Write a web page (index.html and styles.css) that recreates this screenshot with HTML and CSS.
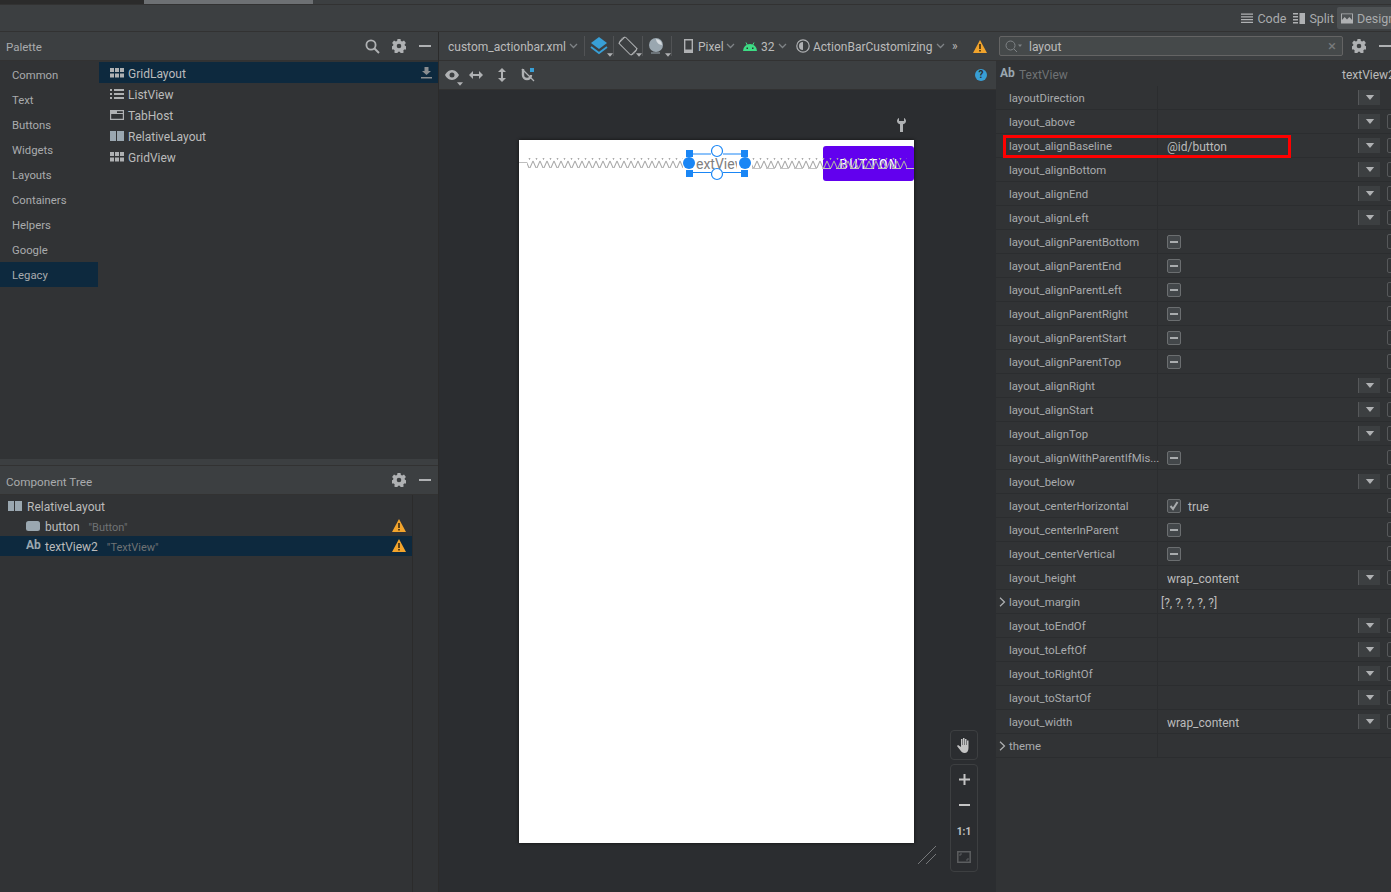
FILE: index.html
```html
<!DOCTYPE html>
<html lang="en">
<head>
    <meta charset="utf-8">
    <title>custom_actionbar.xml</title>
    <link rel="stylesheet" href="styles.css">
</head>
<body>

<!-- Shared icons -->
<svg class="defs" width="0" height="0">
    <defs>
        <symbol id="i-grid" viewBox="0 0 14 10"><path fill="#afb1b3" d="M0 0h4v4H0zM5 0h4v4H5zM10 0h4v4h-4zM0 5.500h4v4H0zM5 5.500h4v4H5zM10 5.500h4v4h-4z"/></symbol>
        <symbol id="i-list" viewBox="0 0 14 10"><path fill="#afb1b3" d="M0 0h2v2H0zM4 0h10v2H4zM0 4h2v2H0zM4 4h10v2H4zM0 8h2v2H0zM4 8h10v2H4z"/></symbol>
        <symbol id="i-tab" viewBox="0 0 14 10"><path fill="none" stroke="#afb1b3" stroke-width="1.200" d="M.6.6h12.800v8.800H.6z"/><path fill="#afb1b3" d="M1 1h6v2h6v1H1z"/></symbol>
        <symbol id="i-rel" viewBox="0 0 14 10"><path fill="#9aa7b0" d="M0 0h6v10H0zM7 0h7v10H7z"/></symbol>
        <symbol id="i-gear" viewBox="0 0 14 14"><path fill="#afb1b3" fill-rule="evenodd" d="M5.500 0h3l.4 2 1.300.6L12 1.600l1.900 2.300-1.300 1.500.3 1.300 1.900.8-.6 2.900-2 .1-.9 1.100.4 2-2.800 1-1-1.800H6.100l-1 1.800-2.800-1 .4-2-.9-1.100-2-.1L-.8 7.500l1.900-.8.300-1.300L.1 3.900 2 1.600l1.800 1 1.300-.6zM7 4.700a2.300 2.300 0 1 0 0 4.600 2.300 2.300 0 0 0 0-4.600z"/></symbol>
        <symbol id="i-warn" viewBox="0 0 14 13"><path fill="#f2a42c" d="M7 0l7 13H0z"/><path fill="#3a2a10" d="M6.200 4h1.600v5H6.200zM6.200 10h1.600v1.600H6.200z"/></symbol>
        <symbol id="i-chev" viewBox="0 0 9 6"><path fill="none" stroke="#7f8386" stroke-width="1.300" d="M1 1l3.500 3.500L8 1"/></symbol>
        <symbol id="i-tri" viewBox="0 0 10 6"><path fill="#afb1b3" d="M0 0h10L5 6z"/></symbol>
        <symbol id="i-arrow" viewBox="0 0 7 10"><path fill="none" stroke="#afb1b3" stroke-width="1.200" d="M1 .7L5.500 5 1 9.300"/></symbol>
        <symbol id="i-min" viewBox="0 0 12 2"><path fill="#afb1b3" d="M0 0h12v2H0z"/></symbol>
        <pattern id="zigzag" width="7" height="10" patternUnits="userSpaceOnUse"><path fill="none" stroke="#aaaaaa" stroke-width="1.100" d="M0 1L3.500 9 7 1"/></pattern>
    </defs>
</svg>

<!-- Top strips -->
<div class="tab-strip"><div class="tab-dark"></div><div class="tab-thumb"></div></div>
<div class="editor-bar">
    <span class="mode mode-code">
        <svg class="ico14" viewBox="0 0 13 11"><path fill="#afb1b3" d="M0 0h13v1.500H0zM0 3h13v1.500H0zM0 6h13v1.500H0zM0 9h13v1.500H0z"/></svg>Code
    </span>
    <span class="mode">
        <svg class="ico14" viewBox="0 0 12 11"><path fill="#afb1b3" d="M0 0h5v1.500H0zM0 3h5v1.500H0zM0 6h5v1.500H0zM0 9h5v1.500H0zM6.500 0H12v11H6.500z"/></svg>Split
    </span>
    <span class="mode mode-on">
        <svg class="ico14" viewBox="0 0 13 11"><path fill="#afb1b3" fill-rule="evenodd" d="M0 0h13v11H0zM1 1v6l3-3 2.500 2.500L9 4l3 3V1z"/></svg>Design
    </span>
</div>

<div class="workspace">

    <!-- Left column -->
    <div class="left-col">
        <div class="panel-head">
            <span class="panel-title">Palette</span>
            <svg class="head-ico search-ico" viewBox="0 0 15 15"><circle cx="6" cy="6" r="4.600" fill="none" stroke="#afb1b3" stroke-width="1.800"/><path stroke="#afb1b3" stroke-width="2" d="M9.500 9.500L14 14"/></svg>
            <svg class="head-ico gear-a"><use href="#i-gear"/></svg>
            <svg class="head-min"><use href="#i-min"/></svg>
        </div>
        <div class="palette">
            <div class="categories">
                <div class="cat">Common</div>
                <div class="cat">Text</div>
                <div class="cat">Buttons</div>
                <div class="cat">Widgets</div>
                <div class="cat">Layouts</div>
                <div class="cat">Containers</div>
                <div class="cat">Helpers</div>
                <div class="cat">Google</div>
                <div class="cat cat-on">Legacy</div>
            </div>
            <div class="widgets">
                <div class="widget widget-on"><svg class="w-ico"><use href="#i-grid"/></svg>GridLayout
                    <svg class="download" viewBox="0 0 11 12"><path fill="#8a8d90" d="M3.500 0h4v4H10L5.500 8 1 4h2.500zM0 10h11v1.500H0z"/></svg>
                </div>
                <div class="widget"><svg class="w-ico"><use href="#i-list"/></svg>ListView</div>
                <div class="widget"><svg class="w-ico"><use href="#i-tab"/></svg>TabHost</div>
                <div class="widget"><svg class="w-ico"><use href="#i-rel"/></svg>RelativeLayout</div>
                <div class="widget"><svg class="w-ico"><use href="#i-grid"/></svg>GridView</div>
            </div>
        </div>
        <div class="split-bar"></div>
        <div class="panel-head tree-head">
            <span class="panel-title">Component Tree</span>
            <svg class="head-ico gear-a"><use href="#i-gear"/></svg>
            <svg class="head-min"><use href="#i-min"/></svg>
        </div>
        <div class="tree">
            <div class="tree-main">
                <div class="node"><svg class="n-ico"><use href="#i-rel"/></svg>RelativeLayout</div>
                <div class="node node-child">
                    <svg class="n-ico" viewBox="0 0 14 10"><rect width="14" height="10" rx="2.500" fill="#9aa7b0"/></svg>button<span class="quoted">"Button"</span>
                    <svg class="n-warn"><use href="#i-warn"/></svg>
                </div>
                <div class="node node-child node-on">
                    <span class="ab">Ab</span>textView2<span class="quoted">"TextView"</span>
                    <svg class="n-warn"><use href="#i-warn"/></svg>
                </div>
            </div>
        </div>
    </div>

    <!-- Design surface -->
    <div class="center-col">
        <div class="bar-one">
            <span class="file-name">custom_actionbar.xml</span>
            <svg class="chev"><use href="#i-chev"/></svg>
            <i class="sep sep-first"></i>
            <span class="tool tool-layers">
                <svg width="20" height="20" viewBox="0 0 20 20"><path fill="#389fd6" d="M10 1l8 6-8 6-8-6z"/><path fill="none" stroke="#389fd6" stroke-width="1.800" d="M2 11l8 6 8-6"/></svg>
                <svg class="tri"><use href="#i-tri"/></svg>
            </span>
            <i class="sep"></i>
            <span class="tool">
                <svg width="20" height="20" viewBox="0 0 20 20"><g fill="none" stroke="#afb1b3" stroke-width="1"><rect x="5.500" y="1.500" width="9" height="17" rx="1" transform="rotate(-45 10 10)"/><path d="M1 8a9 9 0 0 1 6-7M19 12a9 9 0 0 1-6 7"/></g></svg>
                <svg class="tri"><use href="#i-tri"/></svg>
            </span>
            <i class="sep"></i>
            <span class="tool">
                <svg width="20" height="20" viewBox="0 0 20 20"><circle cx="9" cy="9" r="7" fill="#9aa7b0"/><path fill="#d5dade" d="M9 3a6 6 0 0 1 6 6c-3 0-6-3-6-6z"/><path fill="none" stroke="#9aa7b0" d="M4 17h9"/></svg>
                <svg class="tri"><use href="#i-tri"/></svg>
            </span>
            <i class="sep"></i>
            <svg class="dev-ico" viewBox="0 0 9 14"><path fill="none" stroke="#afb1b3" stroke-width="1.400" d="M.7.7h7.600v12.600H.7z"/><path fill="#afb1b3" d="M1 10.500h7v3H1z"/></svg>
            <span class="bar-txt txt-pixel">Pixel</span>
            <svg class="chev"><use href="#i-chev"/></svg>
            <svg class="droid" viewBox="0 0 14 9"><path fill="#3ddc84" d="M0 9a7 7 0 0 1 14 0z"/><path stroke="#3ddc84" d="M3 .5l1.500 3M11 .5L9.500 3.500"/><path fill="#313335" d="M3.500 5.500h1.500v1.500H3.500zM9 5.500h1.500v1.500H9z"/></svg>
            <span class="bar-txt txt-api">32</span>
            <svg class="chev"><use href="#i-chev"/></svg>
            <svg class="theme-ico" viewBox="0 0 14 14"><circle cx="7" cy="7" r="6.200" fill="none" stroke="#afb1b3" stroke-width="1.200"/><path fill="#afb1b3" d="M7 3a4 4 0 0 0 0 8z"/></svg>
            <span class="bar-txt txt-theme">ActionBarCustomizing</span>
            <svg class="chev"><use href="#i-chev"/></svg>
            <span class="more">&raquo;</span>
            <svg class="bar-warn"><use href="#i-warn"/></svg>
        </div>
        <div class="bar-two">
            <span class="tool eye">
                <svg width="14" height="10" viewBox="0 0 14 10"><path fill="#afb1b3" fill-rule="evenodd" d="M7 0c3.500 0 6 3 7 5-1 2-3.500 5-7 5S1 7 0 5c1-2 3.500-5 7-5zm0 2.500a2.500 2.500 0 1 0 0 5 2.500 2.500 0 0 0 0-5z"/></svg>
                <svg class="tri"><use href="#i-tri"/></svg>
            </span>
            <svg class="arrow-h" viewBox="0 0 14 8"><path fill="#afb1b3" d="M0 4l4-4v3h6V0l4 4-4 4V5H4v3z"/></svg>
            <svg class="arrow-v" viewBox="0 0 8 14"><path fill="#afb1b3" d="M4 0l4 4H5v6h3l-4 4-4-4h3V4H0z"/></svg>
            <svg class="magnet" viewBox="0 0 14 14"><path fill="none" stroke="#afb1b3" stroke-width="2.400" d="M2 1v6a4 4 0 0 0 8 0"/><path stroke="#afb1b3" stroke-width="1.200" d="M1 1l12 12"/><path fill="#389fd6" d="M9 0h4v4H9z"/></svg>
            <span class="help">?</span>
        </div>
        <div class="surface">
            <div class="device">
                <svg class="blueprint" width="395" height="60" viewBox="0 0 395 60">
                    <path fill="none" stroke="#bdbdbd" d="M0 22.500h8"/>
                    <rect x="8" y="18" width="156" height="10" fill="url(#zigzag)"/>
                    <rect x="304" y="6" width="91" height="35" rx="3" fill="#6200ee"/>
                    <text class="btn-label" x="350" y="29" text-anchor="middle">BUTTON</text>
                    <rect x="233" y="18" width="155" height="10" fill="url(#zigzag)"/>
                    <path fill="none" stroke="#c4c4c4" stroke-dasharray="9 5" d="M233 28.500h162"/>
                    <svg x="177" y="10" width="41" height="30"><text class="tv-label" x="0" y="19">extView</text></svg>
                    <g fill="none" stroke="#1a86f5" stroke-width="1.200">
                        <path d="M174 14h18M204 14h18M174 32.500h18M204 32.500h18"/>
                    </g>
                    <g fill="#1a86f5">
                        <rect x="167" y="10" width="7" height="7"/>
                        <rect x="222" y="10" width="7" height="7"/>
                        <rect x="167" y="30" width="7" height="7"/>
                        <rect x="222" y="30" width="7" height="7"/>
                        <circle cx="170" cy="23" r="6"/>
                        <circle cx="226" cy="23" r="6"/>
                    </g>
                    <g fill="#fff" stroke="#1a86f5" stroke-width="1.200">
                        <circle cx="198" cy="11" r="5.500"/>
                        <circle cx="198" cy="34" r="5.500"/>
                    </g>
                </svg>
            </div>
            <svg class="wrench" viewBox="0 0 9 14"><path fill="#afb1b3" d="M2 0v3h5V0c1.500.7 2 2 2 3 0 1.500-1 2.700-3 3.300V14H3V6.300C1 5.700 0 4.500 0 3c0-1 .5-2.300 2-3z"/></svg>
            <div class="float-box hand-box">
                <svg width="14" height="15" viewBox="0 0 14 15"><path fill="#c4c4c4" d="M4 1h1.500v6H6V0h1.500v7H8V1h1.500v6h.5V2.500h1.500V10c0 3-1.500 5-4 5-2 0-3-1-4-2.500L0 8l1-1 3 2z"/></svg>
            </div>
            <div class="float-box zoom-box">
                <svg width="11" height="11" viewBox="0 0 11 11"><path fill="#c4c4c4" d="M4.500 0h2v4.500H11v2H6.500V11h-2V6.500H0v-2h4.500z"/></svg>
                <svg width="11" height="2" viewBox="0 0 11 2"><path fill="#c4c4c4" d="M0 0h11v2H0z"/></svg>
                <span class="one-one">1:1</span>
                <svg width="14" height="12" viewBox="0 0 14 12"><path fill="none" stroke="#5c5e60" stroke-width="1.500" d="M.8.8h12.400v10.400H.8z"/><path fill="none" stroke="#5c5e60" d="M3 5V3h2M11 7v2H9"/></svg>
            </div>
            <svg class="resize" viewBox="0 0 18 18"><path stroke="#77797b" d="M0 18L18 0M8 18L18 8"/></svg>
        </div>
    </div>

    <!-- Attributes -->
    <div class="right-col">
        <div class="search-row">
            <div class="search-box">
                <svg class="search-small" viewBox="0 0 17 13"><circle cx="5.500" cy="5.500" r="4.500" fill="none" stroke="#7f8386"/><path stroke="#7f8386" d="M9 9l3 3"/><path fill="#7f8386" d="M13 4.500h4l-2 2.500z"/></svg>
                <span class="search-text">layout</span>
                <span class="search-x">&times;</span>
            </div>
            <svg class="head-ico gear-b"><use href="#i-gear"/></svg>
            <svg class="head-min"><use href="#i-min"/></svg>
        </div>
        <div class="attr-head">
            <span class="ab ab-head">Ab</span><span class="attr-type">TextView</span><span class="attr-id">textView2</span>
        </div>
        <div class="attr-table">
            <div class="attr"><span class="a-name">layoutDirection</span><span class="a-val"></span><span class="drop"><svg class="drop-tri"><use href="#i-tri"/></svg></span></div>
            <div class="attr"><span class="a-name">layout_above</span><span class="a-val"></span><span class="drop"><svg class="drop-tri"><use href="#i-tri"/></svg></span><i class="box"></i></div>
            <div class="attr"><span class="a-name">layout_alignBaseline</span><span class="a-val">@id/button</span><span class="drop"><svg class="drop-tri"><use href="#i-tri"/></svg></span><i class="box"></i><div class="red-box"></div></div>
            <div class="attr"><span class="a-name">layout_alignBottom</span><span class="a-val"></span><span class="drop"><svg class="drop-tri"><use href="#i-tri"/></svg></span><i class="box"></i></div>
            <div class="attr"><span class="a-name">layout_alignEnd</span><span class="a-val"></span><span class="drop"><svg class="drop-tri"><use href="#i-tri"/></svg></span><i class="box"></i></div>
            <div class="attr"><span class="a-name">layout_alignLeft</span><span class="a-val"></span><span class="drop"><svg class="drop-tri"><use href="#i-tri"/></svg></span><i class="box"></i></div>
            <div class="attr"><span class="a-name">layout_alignParentBottom</span><span class="a-val"><i class="tick"></i></span><span class="no-drop"></span><i class="box"></i></div>
            <div class="attr"><span class="a-name">layout_alignParentEnd</span><span class="a-val"><i class="tick"></i></span><span class="no-drop"></span><i class="box"></i></div>
            <div class="attr"><span class="a-name">layout_alignParentLeft</span><span class="a-val"><i class="tick"></i></span><span class="no-drop"></span><i class="box"></i></div>
            <div class="attr"><span class="a-name">layout_alignParentRight</span><span class="a-val"><i class="tick"></i></span><span class="no-drop"></span><i class="box"></i></div>
            <div class="attr"><span class="a-name">layout_alignParentStart</span><span class="a-val"><i class="tick"></i></span><span class="no-drop"></span><i class="box"></i></div>
            <div class="attr"><span class="a-name">layout_alignParentTop</span><span class="a-val"><i class="tick"></i></span><span class="no-drop"></span><i class="box"></i></div>
            <div class="attr"><span class="a-name">layout_alignRight</span><span class="a-val"></span><span class="drop"><svg class="drop-tri"><use href="#i-tri"/></svg></span><i class="box"></i></div>
            <div class="attr"><span class="a-name">layout_alignStart</span><span class="a-val"></span><span class="drop"><svg class="drop-tri"><use href="#i-tri"/></svg></span><i class="box"></i></div>
            <div class="attr"><span class="a-name">layout_alignTop</span><span class="a-val"></span><span class="drop"><svg class="drop-tri"><use href="#i-tri"/></svg></span><i class="box"></i></div>
            <div class="attr"><span class="a-name">layout_alignWithParentIfMis...</span><span class="a-val"><i class="tick"></i></span><span class="no-drop"></span><i class="box"></i></div>
            <div class="attr"><span class="a-name">layout_below</span><span class="a-val"></span><span class="drop"><svg class="drop-tri"><use href="#i-tri"/></svg></span><i class="box"></i></div>
            <div class="attr"><span class="a-name">layout_centerHorizontal</span><span class="a-val"><i class="tick tick-on"><svg viewBox="0 0 10 10"><path fill="none" stroke="#a9acae" stroke-width="2" d="M1.500 5l2.500 3 4.500-7"/></svg></i>true</span><span class="no-drop"></span><i class="box"></i></div>
            <div class="attr"><span class="a-name">layout_centerInParent</span><span class="a-val"><i class="tick"></i></span><span class="no-drop"></span><i class="box"></i></div>
            <div class="attr"><span class="a-name">layout_centerVertical</span><span class="a-val"><i class="tick"></i></span><span class="no-drop"></span><i class="box"></i></div>
            <div class="attr"><span class="a-name">layout_height</span><span class="a-val">wrap_content</span><span class="drop"><svg class="drop-tri"><use href="#i-tri"/></svg></span><i class="box"></i></div>
            <div class="attr"><svg class="fold"><use href="#i-arrow"/></svg><span class="a-name">layout_margin</span><span class="a-val a-val-tight">[?, ?, ?, ?, ?]</span></div>
            <div class="attr"><span class="a-name">layout_toEndOf</span><span class="a-val"></span><span class="drop"><svg class="drop-tri"><use href="#i-tri"/></svg></span><i class="box"></i></div>
            <div class="attr"><span class="a-name">layout_toLeftOf</span><span class="a-val"></span><span class="drop"><svg class="drop-tri"><use href="#i-tri"/></svg></span><i class="box"></i></div>
            <div class="attr"><span class="a-name">layout_toRightOf</span><span class="a-val"></span><span class="drop"><svg class="drop-tri"><use href="#i-tri"/></svg></span><i class="box"></i></div>
            <div class="attr"><span class="a-name">layout_toStartOf</span><span class="a-val"></span><span class="drop"><svg class="drop-tri"><use href="#i-tri"/></svg></span><i class="box"></i></div>
            <div class="attr"><span class="a-name">layout_width</span><span class="a-val">wrap_content</span><span class="drop"><svg class="drop-tri"><use href="#i-tri"/></svg></span><i class="box"></i></div>
            <div class="attr"><svg class="fold"><use href="#i-arrow"/></svg><span class="a-name">theme</span><span class="a-val"></span></div>
        </div>
    </div>
</div>

</body>
</html>
```

FILE: styles.css
```css
/* General Layout */
html, body {
    height: 100%;
}

body {
    margin: 0;
    background-color: #3c3f41;
    color: #bbbbbb;
    font-family: Roboto, sans-serif;
    font-size: 12px;
    overflow: hidden;
    display: flex;
    flex-direction: column;
}

svg {
    flex: none;
}

.defs {
    position: absolute;
}

/* Top Strips */
.tab-strip {
    height: 4px;
    display: flex;
    background: #3c3f41;
    border-bottom: 1px solid #323232;
}

.tab-dark {
    width: 144px;
    background: #2b2b2b;
}

.tab-thumb {
    width: 169px;
    background: #6d7073;
}

.editor-bar {
    height: 26px;
    display: flex;
    justify-content: flex-end;
    align-items: center;
    gap: 3px;
    border-bottom: 1px solid #323232;
    overflow: hidden;
}

.mode {
    display: flex;
    align-items: center;
    gap: 4px;
    height: 22px;
    white-space: nowrap;
    font-size: 12.500px;
    color: #a9abad;
}

.mode-code {
    margin-right: 4px;
}

.mode-on {
    flex: none;
    width: 54px;
    box-sizing: border-box;
    padding-left: 4px;
    background: #4e5254;
    border-radius: 2px 0 0 2px;
    overflow: hidden;
}

.ico14 {
    width: 12px;
    height: 11px;
}

/* Three Columns */
.workspace {
    flex: 1;
    display: flex;
    min-height: 0;
}

.left-col {
    width: 438px;
    display: flex;
    flex-direction: column;
    background: #313335;
}

.center-col {
    width: 558px;
    display: flex;
    flex-direction: column;
    background: #2b2d30;
    border-left: 1px solid #2b2b2b;
    box-sizing: border-box;
}

.right-col {
    flex: 1;
    min-width: 0;
    display: flex;
    flex-direction: column;
    background: #313335;
}

/* Panel Headers */
.panel-head {
    height: 28px;
    flex: none;
    display: flex;
    align-items: center;
    padding: 0 7px 0 6px;
    background: #3c3f41;
    border-bottom: 1px solid #323232;
}

.panel-title {
    flex: 1;
    padding-top: 2px;
    font-size: 11.500px;
    color: #a9abad;
}

.tree-head .panel-title {
    padding-top: 4px;
    font-size: 11.700px;
}

.head-ico {
    width: 14px;
    height: 14px;
}

.search-ico {
    width: 15px;
    height: 15px;
    margin-right: 12px;
}

.gear-a {
    margin-right: 13px;
}

.head-min {
    width: 12px;
    height: 2px;
}

/* Palette */
.palette {
    height: 398px;
    flex: none;
    display: flex;
    padding-top: 1px;
    box-sizing: border-box;
}

.categories {
    width: 98px;
    flex: none;
    margin-right: 1px;
}

.cat {
    height: 25px;
    line-height: 27px;
    padding-left: 12px;
    font-size: 11.300px;
    color: #a9abad;
}

.cat-on {
    background: #0d293e;
}

.widgets {
    flex: 1;
}

.widget {
    height: 21px;
    box-sizing: border-box;
    padding: 2px 0 0 11px;
    display: flex;
    align-items: center;
}

.widget-on {
    background: #0d293e;
}

.w-ico {
    width: 14px;
    height: 10px;
    margin: 0 4px 2px 0;
}

.download {
    width: 11px;
    height: 12px;
    margin: 0 6px 2px auto;
}

.split-bar {
    height: 6px;
    flex: none;
    background: #3c3f41;
    border-bottom: 1px solid #323232;
}

/* Component Tree */
.tree {
    flex: 1;
}

.tree-main {
    width: 413px;
    height: 100%;
    padding-top: 1px;
    box-sizing: border-box;
    border-right: 1px solid #2b2b2b;
}

.node {
    height: 20px;
    box-sizing: border-box;
    padding: 2px 0 0 8px;
    display: flex;
    align-items: center;
}

.n-ico {
    width: 14px;
    height: 10px;
    margin: 0 5px 2px 0;
}

.node-child {
    padding-left: 26px;
}

.node-on {
    background: #0d293e;
}

.ab {
    width: 14px;
    margin-right: 5px;
    font-size: 12px;
    font-weight: 700;
    color: #9aa7b0;
}

.node .ab {
    margin-bottom: 4px;
}

.quoted {
    margin-left: 9px;
    font-size: 11px;
    color: #6f7274;
}

.n-warn {
    width: 14px;
    height: 13px;
    margin: 0 6px 4px auto;
}

/* Surface Toolbars */
.bar-one {
    height: 28px;
    flex: none;
    display: flex;
    align-items: center;
    padding: 0 9px;
    background: #3c3f41;
    border-bottom: 1px solid #323232;
}

.file-name {
    width: 118px;
    flex: none;
    padding-top: 2px;
    white-space: nowrap;
}

.bar-txt {
    padding-top: 2px;
    white-space: nowrap;
}

.txt-pixel {
    width: 25px;
}

.txt-api {
    width: 14px;
}

.txt-theme {
    width: 120px;
}

.chev {
    width: 9px;
    height: 6px;
    margin-left: 3px;
}

.sep {
    width: 1px;
    height: 20px;
    flex: none;
    background: #515355;
    margin: 0 4px;
}

.sep-first {
    margin-left: 6px;
}

.tool {
    width: 20px;
    height: 22px;
    flex: none;
    position: relative;
    display: flex;
    align-items: center;
}

.tri {
    position: absolute;
    right: -4px;
    bottom: 0;
    width: 6px;
    height: 4px;
}

.dev-ico {
    width: 9px;
    height: 14px;
    margin: 0 5px 0 8px;
}

.droid {
    width: 14px;
    height: 9px;
    margin: 0 4px 0 8px;
}

.theme-ico {
    width: 14px;
    height: 14px;
    margin: 0 3px 0 9px;
}

.more {
    margin-left: 7px;
}

.bar-warn {
    width: 14px;
    height: 13px;
    margin-left: auto;
}

.bar-two {
    height: 28px;
    flex: none;
    display: flex;
    align-items: center;
    padding-left: 6px;
    background: #3c3f41;
    border-bottom: 1px solid #323232;
}

.eye {
    width: 14px;
}

.arrow-h {
    width: 14px;
    height: 8px;
    margin-left: 10px;
}

.arrow-v {
    width: 8px;
    height: 14px;
    margin-left: 15px;
}

.magnet {
    width: 14px;
    height: 14px;
    margin-left: 15px;
}

.help {
    width: 12px;
    height: 12px;
    margin-left: auto;
    margin-right: 9px;
    border-radius: 50%;
    background: #389fd6;
    color: #2b2d30;
    font-size: 10px;
    font-weight: 700;
    line-height: 12px;
    text-align: center;
}

/* Design Surface */
.surface {
    flex: 1;
    position: relative;
    padding: 50px 0 0 80px;
}

.device {
    width: 395px;
    height: 703px;
    background: #ffffff;
    box-shadow: 0 0 3px #111111;
}

.blueprint {
    display: block;
}

.btn-label {
    font-family: "Liberation Mono", monospace;
    font-size: 14px;
    letter-spacing: 1.500px;
    fill: #ffffff;
}

.tv-label {
    font-size: 14px;
    fill: #808080;
}

.wrench {
    position: absolute;
    left: 458px;
    top: 28px;
    width: 9px;
    height: 14px;
}

.float-box {
    position: absolute;
    left: 511px;
    width: 28px;
    box-sizing: border-box;
    border: 1px solid #3d3f41;
    border-radius: 4px;
}

.hand-box {
    top: 640px;
    height: 30px;
    display: flex;
    align-items: center;
    justify-content: center;
}

.zoom-box {
    top: 674px;
    height: 108px;
    padding: 1px 0;
    display: grid;
    grid-auto-rows: 26px;
    place-items: center;
}

.one-one {
    font-size: 10px;
    font-weight: 700;
    color: #c4c4c4;
}

.resize {
    position: absolute;
    left: 479px;
    top: 756px;
    width: 18px;
    height: 18px;
}

/* Attribute Search */
.search-row {
    height: 28px;
    flex: none;
    display: flex;
    align-items: center;
    padding-left: 3px;
    background: #3c3f41;
    border-bottom: 1px solid #323232;
}

.search-box {
    width: 344px;
    height: 20px;
    box-sizing: border-box;
    display: flex;
    align-items: center;
    padding: 0 6px 0 5px;
    background: #45494a;
    border: 1px solid #646464;
    border-radius: 2px;
}

.search-small {
    width: 17px;
    height: 13px;
    margin-right: 7px;
}

.search-text {
    flex: 1;
    padding-top: 1px;
}

.search-x {
    font-size: 15px;
    color: #777a7c;
}

.gear-b {
    margin: 0 13px 0 9px;
}

.attr-head {
    height: 25px;
    box-sizing: border-box;
    flex: none;
    display: flex;
    align-items: center;
    padding: 2px 0 0 4px;
    white-space: nowrap;
}

.ab-head {
    margin-right: 5px;
    margin-bottom: 4px;
}

.attr-type {
    width: 323px;
    flex: none;
    color: #6f7274;
}

/* Attribute Rows */
.attr-table {
    flex: 1;
    overflow: hidden;
}

.attr {
    height: 24px;
    box-sizing: border-box;
    position: relative;
    display: flex;
    align-items: center;
    border-bottom: 1px solid #2b2d2f;
    white-space: nowrap;
    width: 410px;
}

.a-name {
    width: 162px;
    flex: none;
    box-sizing: border-box;
    padding-left: 13px;
    height: 100%;
    line-height: 25px;
    font-size: 11.350px;
    color: #a9abad;
    border-right: 1px solid #2b2d2f;
}

.a-val {
    width: 200px;
    height: 100%;
    flex: none;
    box-sizing: border-box;
    padding: 2px 0 0 9px;
    display: flex;
    align-items: center;
}

.a-val-tight {
    padding-left: 3px;
}

.fold {
    position: absolute;
    left: 3px;
    top: 7px;
    width: 7px;
    height: 10px;
}

.drop {
    width: 22px;
    height: 15px;
    flex: none;
    display: flex;
    align-items: center;
    justify-content: center;
    background: #3c3f41;
    border-left: 1px solid #56585a;
    box-sizing: border-box;
}

.drop-tri {
    width: 10px;
    height: 5px;
}

.no-drop {
    width: 22px;
    flex: none;
}

.box {
    width: 14px;
    height: 15px;
    flex: none;
    box-sizing: border-box;
    margin-left: 7px;
    border: 1px solid #56585a;
    border-radius: 2px;
}

.tick {
    width: 14px;
    height: 14px;
    margin-bottom: 2px;
    box-sizing: border-box;
    display: flex;
    align-items: center;
    justify-content: center;
    background: #43474a;
    border: 1px solid #6b6e70;
    border-radius: 2px;
}

.tick::before {
    content: "";
    width: 8px;
    height: 2px;
    background: #a9acae;
}

.tick-on {
    margin-right: 7px;
}

.tick-on::before {
    display: none;
}

.tick-on svg {
    width: 10px;
    height: 10px;
}

/* Highlight around the edited attribute */
.red-box {
    position: absolute;
    left: 7px;
    top: 1px;
    width: 288px;
    height: 23px;
    box-sizing: border-box;
    border: 3px solid #ff0000;
}
```
